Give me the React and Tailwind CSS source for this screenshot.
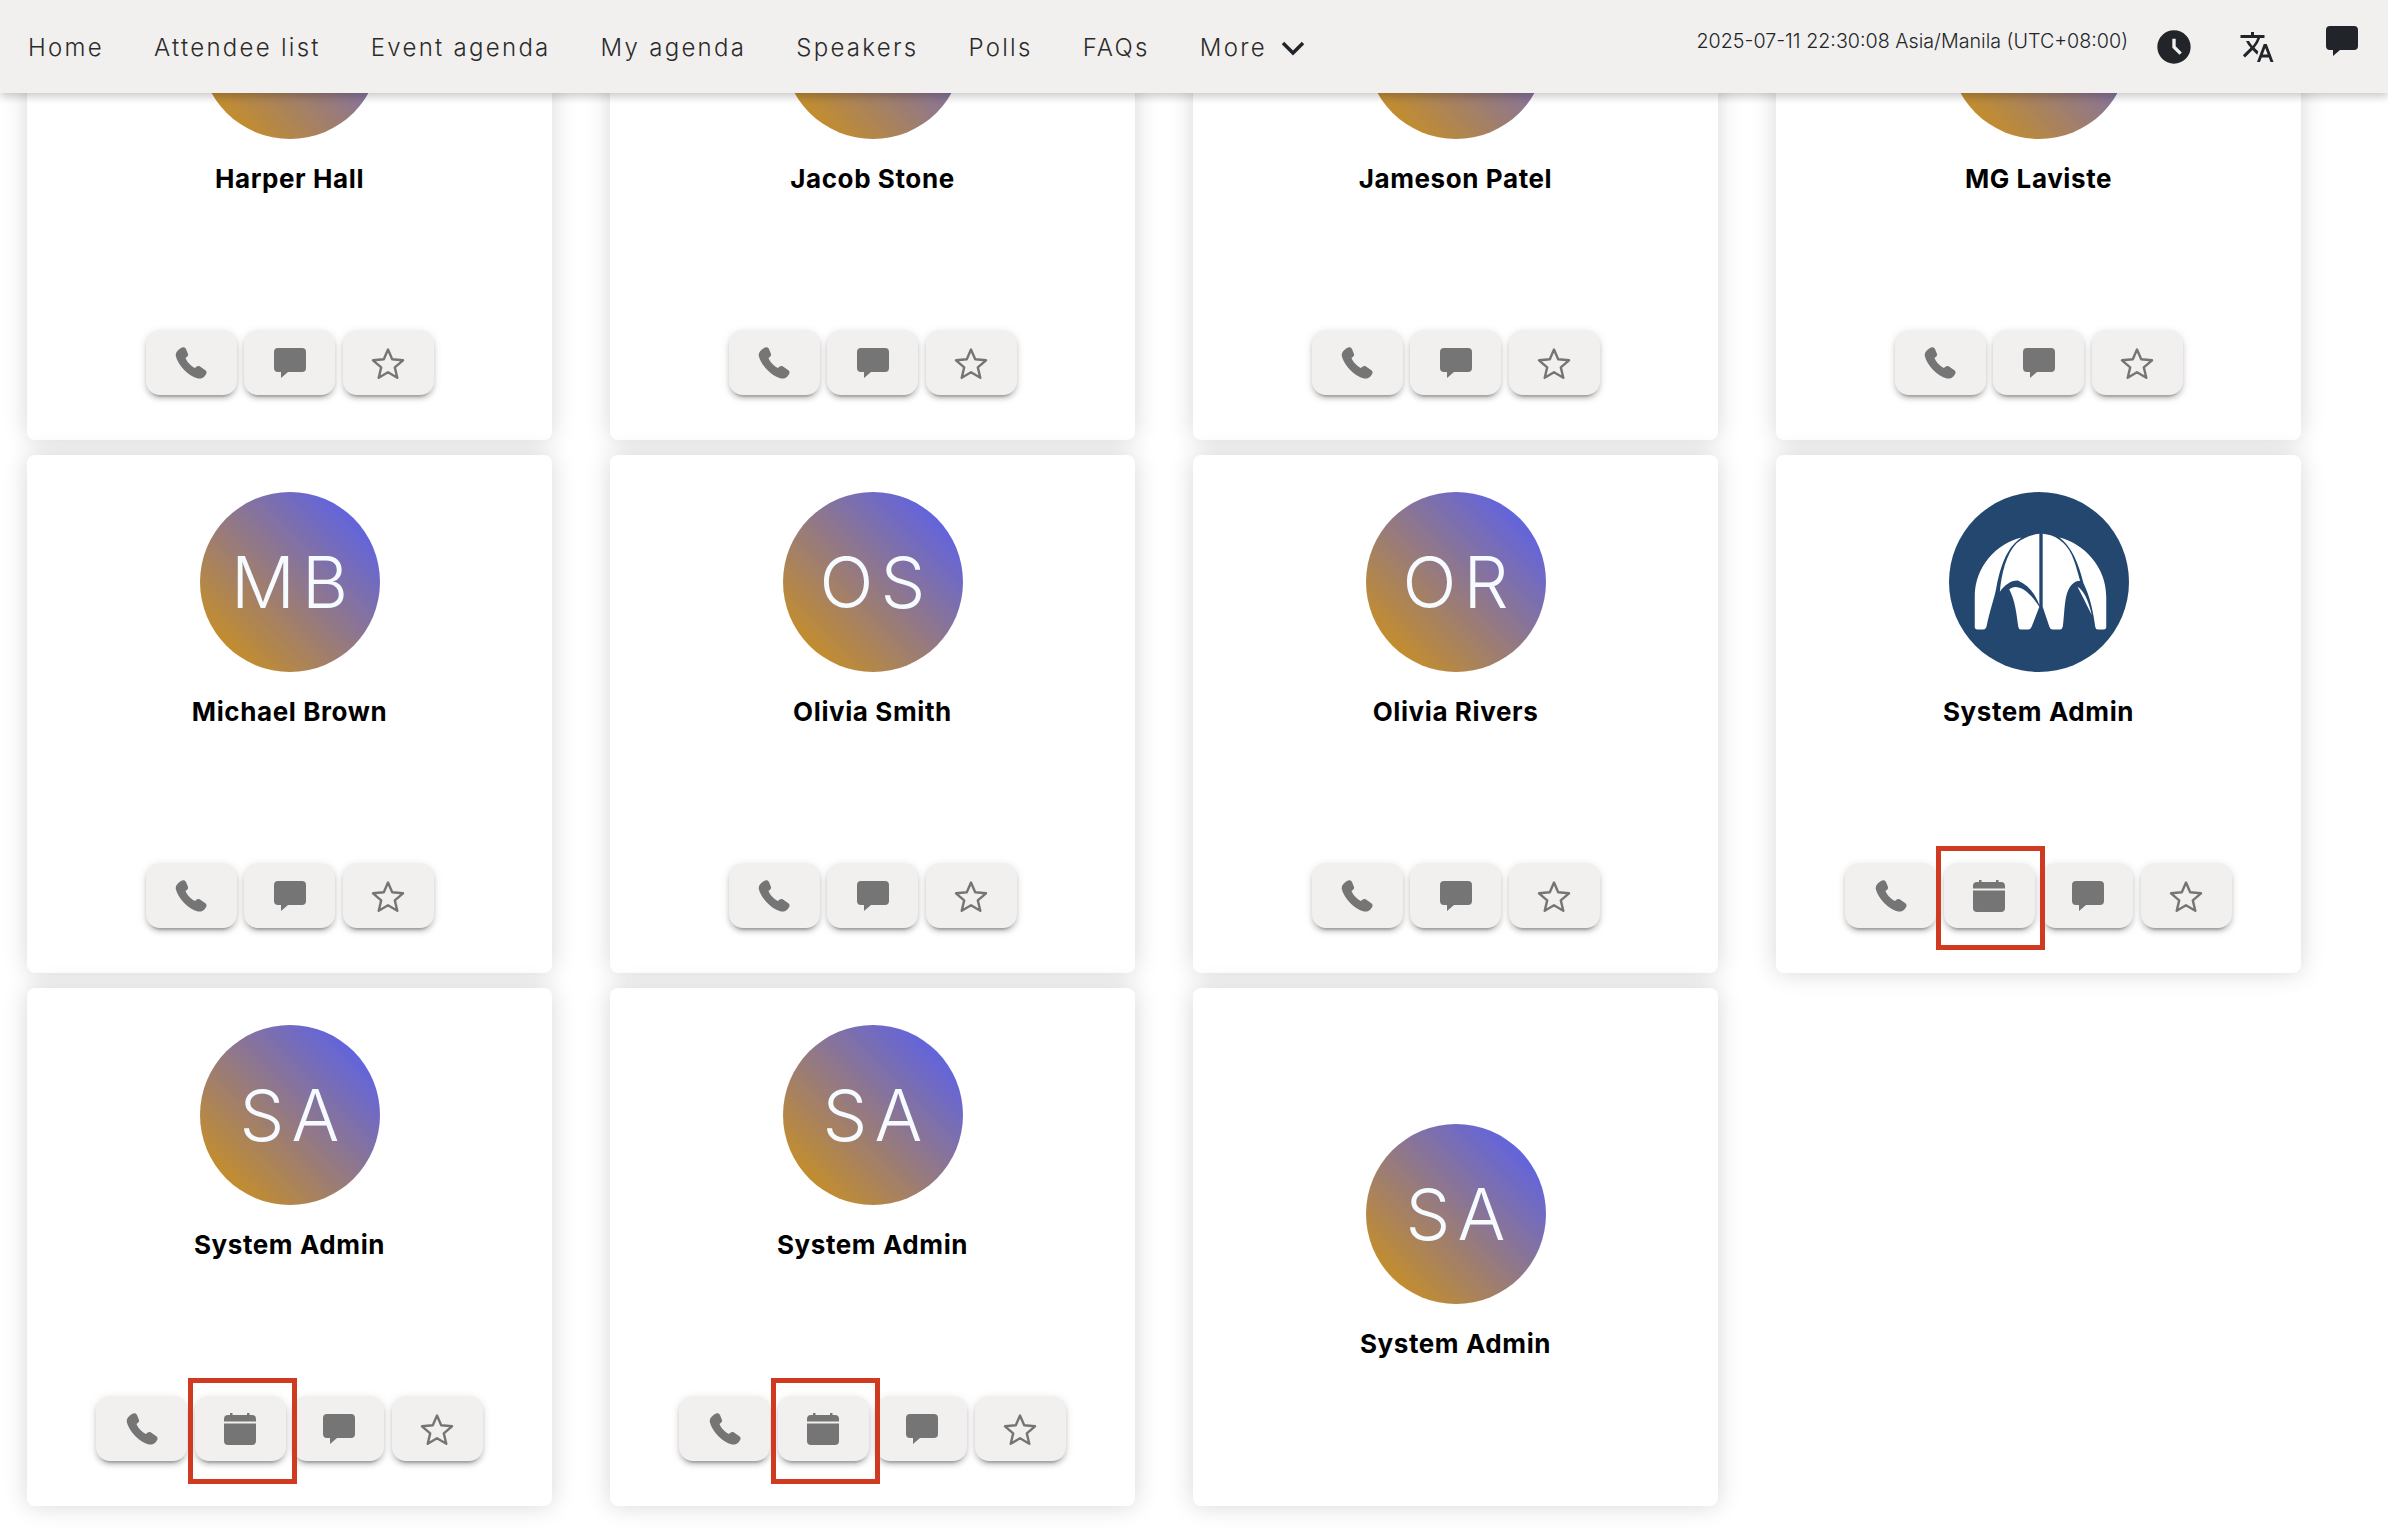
import React from "react";
import { MdAccessTimeFilled, MdTranslate } from "react-icons/md";

const navItems = ["Home", "Attendee list", "Event agenda", "My agenda", "Speakers", "Polls", "FAQs"];

// first row is scrolled under the top bar, their initials are never visible
const attendees = [
  { name: "Harper Hall" },
  { name: "Jacob Stone" },
  { name: "Jameson Patel" },
  { name: "MG Laviste" },
  { name: "Michael Brown", initials: "MB" },
  { name: "Olivia Smith", initials: "OS" },
  { name: "Olivia Rivers", initials: "OR" },
  { name: "System Admin", logo: true, calendar: true, box: "-left-[8px] -right-[10px] -top-[17px] -bottom-[22px]" },
  { name: "System Admin", initials: "SA", calendar: true, box: "-left-[7px] -right-[11px] -top-[18px] -bottom-[23px]" },
  { name: "System Admin", initials: "SA", calendar: true, box: "-left-[7px] -right-[11px] -top-[18px] -bottom-[23px]" },
  { name: "System Admin", initials: "SA", noActions: true },
];

const PhoneIcon = () => (
  <svg width="32" height="32" viewBox="0 0 32 32" fill="#757575">
    <path d="M6 1C8-.5 10 0 11 2l2 5c.5 2-1 3-2.500 4C12 15 16 19 20 21c1.500-1.500 3-2.500 5-1.500l5 3.500c2 1.500 2 3 .5 5-2 3-4.500 4-7.500 3.500C13 29 3 18 .8 9 .2 6 2.500 3 6 1Z" />
  </svg>
);

const CalendarIcon = () => (
  <svg width="32" height="32" viewBox="0 0 32 32" fill="#757575">
    <path d="M6 0h2.500v2H23V0h2.500v2H28a4 4 0 0 1 4 4v2.500H0V6a4 4 0 0 1 4-4h2Z" />
    <path d="M0 10.500h32V28a4 4 0 0 1-4 4H4a4 4 0 0 1-4-4Z" />
  </svg>
);

const ChatIcon = ({ color = "#757575" }) => (
  <svg width="32" height="30" viewBox="0 0 32 30" fill={color}>
    <path d="M4 0h24a4 4 0 0 1 4 4v16a4 4 0 0 1-4 4H14l-7 6v-6H4a4 4 0 0 1-4-4V4a4 4 0 0 1 4-4Z" />
  </svg>
);

const StarIcon = () => (
  <svg width="34" height="32" viewBox="0 0 34 32" fill="none" stroke="#757575" strokeWidth="2.4" strokeLinejoin="round">
    <path d="M17 2.500l4.200 9.800 10.800 1-8.200 7.100 2.500 10.400L17 25.300 7.700 30.800l2.500-10.400L2 13.300l10.800-1Z" />
  </svg>
);

const Logo = () => (
  <svg width="180" height="180" viewBox="28 7 538 538" className="block">
    <circle cx="297" cy="276" r="269" fill="#24476f" />
    <g fill="#fff">
      <path d="M105 410V320C105 230 170 160 245 143C205 170 185 215 170 290C165 320 150 360 140 410Q138 418 130 418H113Q105 418 105 410Z" />
      <path d="M298 132V345C285 310 265 285 235 272C215 270 195 285 180 305C185 250 200 190 230 160C250 143 275 134 298 132Z" />
      <path d="M208 298C225 282 260 290 298 350L275 410Q272 418 265 418H243Q236 418 235 410C230 370 225 330 208 298Z" />
      <path d="M308 132C345 135 375 155 395 195C408 225 413 250 420 272C400 272 385 290 378 320C372 350 372 385 368 410Q366 418 360 418H338Q330 418 328 410L308 350Z" />
      <path d="M412 290C430 300 445 330 455 375C440 345 425 315 412 290Z" />
      <path d="M358 143C430 160 498 230 498 320V410Q498 418 490 418H473Q466 418 465 410C460 370 450 320 430 280C415 220 395 170 358 143Z" />
    </g>
  </svg>
);

const ActionButton = ({ children }) => (
  <button
    type="button"
    className="flex h-[65px] w-[91px] items-center justify-center rounded-[14px] bg-[#f1f0ee] shadow-[0_6px_2px_-4px_rgba(0,0,0,0.2),0_4px_4px_0_rgba(0,0,0,0.14),0_2px_10px_0_rgba(0,0,0,0.12)]"
  >
    {children}
  </button>
);

const AttendeeCard = ({ attendee }) => {
  const { name, initials, logo, calendar, box, noActions } = attendee;
  return (
    <div
      className={`flex h-[518px] flex-col items-center rounded-[8px] bg-white shadow-[0_0_24px_rgba(0,0,0,0.16)] ${
        noActions ? "pt-[136px]" : "pt-[37px]"
      }`}
    >
      {logo ? (
        <Logo />
      ) : (
        <div className="flex h-[180px] w-[180px] items-center justify-center rounded-full bg-[linear-gradient(45deg,#c28d2f_15%,#6364dc_85%)] pl-[7px] text-[71px] font-light tracking-[0.1em] text-[#f5fbff]">
          {initials}
        </div>
      )}
      <div className="mt-[24px] text-[26px] leading-[32px] font-bold tracking-[0.023em] text-black">{name}</div>
      {!noActions && (
        <div className="mt-auto mb-[45px] flex gap-[7.500px]">
          <ActionButton>
            <PhoneIcon />
          </ActionButton>
          {calendar && (
            <div className="relative">
              <ActionButton>
                <CalendarIcon />
              </ActionButton>
              <div className={`absolute z-[5] border-[5px] border-[#d03a20] ${box}`} />
            </div>
          )}
          <ActionButton>
            <ChatIcon />
          </ActionButton>
          <ActionButton>
            <StarIcon />
          </ActionButton>
        </div>
      )}
    </div>
  );
};

export default function App() {
  return (
    <div className="h-[1532px] overflow-hidden bg-white font-['Inter',sans-serif]">
      {/* top bar stays above the scrolled list */}
      <header className="relative z-10 flex h-[93px] items-center bg-[#f1f0ee] pr-[30px] pl-[28px] text-[#2b2b2b] shadow-[0_4px_8px_rgba(0,0,0,0.2)]">
        <nav className="flex items-center gap-[50px] pt-[2px] text-[24px] font-light tracking-[0.095em]">
          {navItems.map((item) => (
            <span key={item}>{item}</span>
          ))}
          <span className="flex items-center gap-[14px]">
            More
            <svg width="24" height="16" viewBox="0 0 24 16" fill="none" stroke="#212529" strokeWidth="3.500">
              <path d="M2 3l10 10L22 3" />
            </svg>
          </span>
        </nav>
        <div className="ml-auto flex items-center">
          <span className="-mt-[10px] text-[19.700px] font-light text-[#212529]">2025-07-11 22:30:08 Asia/Manila (UTC+08:00)</span>
          <MdAccessTimeFilled className="ml-[26px] h-[40px] w-[40px] text-[#212529]" />
          <MdTranslate className="ml-[45px] h-[36px] w-[36px] text-[#212529]" />
          <span className="-mt-[12px] ml-[51px]">
            <ChatIcon color="#212529" />
          </span>
        </div>
      </header>

      <main className="-mt-[171px] grid grid-cols-[repeat(4,525px)] gap-x-[58px] gap-y-[15px] pl-[27px]">
        {attendees.map((attendee, i) => (
          <AttendeeCard key={i} attendee={attendee} />
        ))}
      </main>
    </div>
  );
}
